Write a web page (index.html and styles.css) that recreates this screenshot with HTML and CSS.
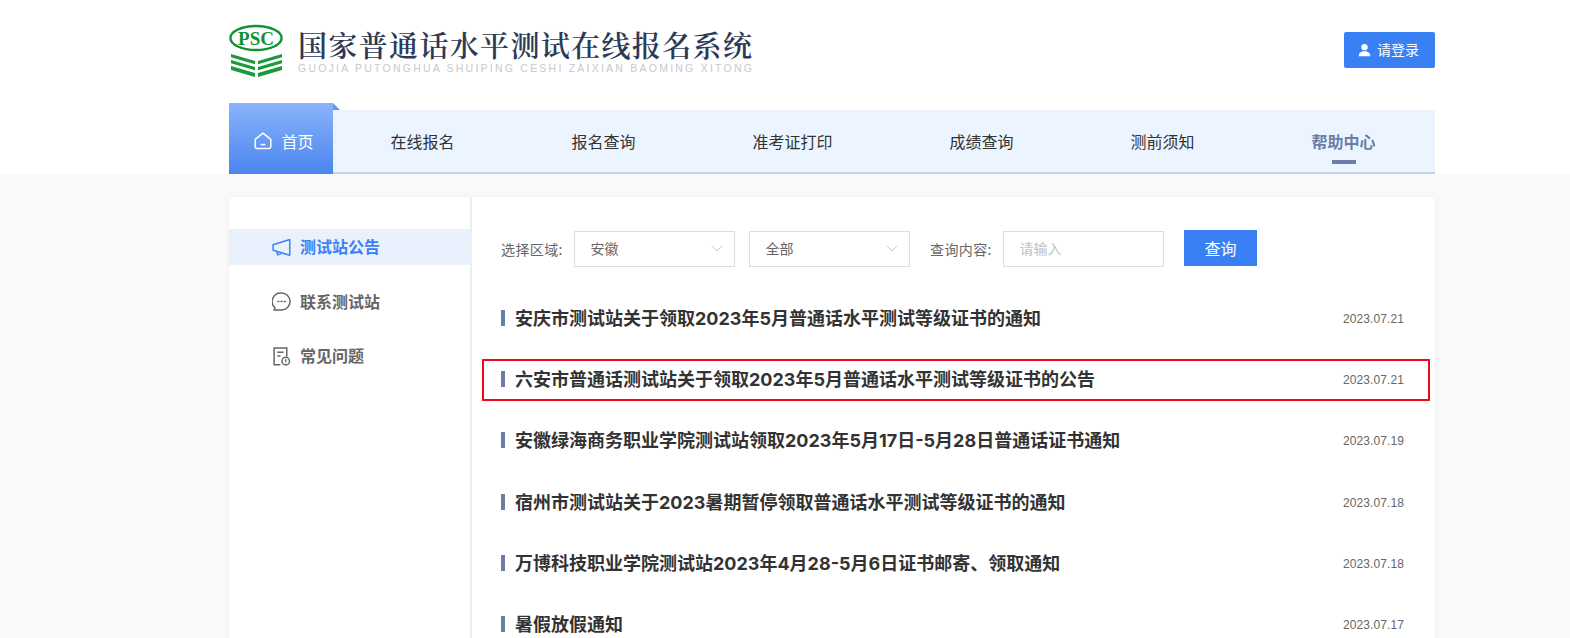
FILE: index.html
```html
<!DOCTYPE html>
<html lang="zh-CN">
<head>
<meta charset="utf-8">
<title>国家普通话水平测试在线报名系统</title>
<link rel="stylesheet" href="styles.css">
</head>
<body>
<header class="header">
  <div class="wrap">
    <div class="topbar">
      <a class="brand">
        <svg class="logo" viewBox="0 0 54 54" width="54" height="54" aria-hidden="true">
          <ellipse cx="27" cy="14" rx="25.6" ry="12" fill="none" stroke="#0f9233" stroke-width="2.4"/>
          <text x="27" y="21" class="logo-text" text-anchor="middle">PSC</text>
          <g fill="#1a9a3a">
            <path d="M2 30 26 37V40.2L2 33.2Z"/>
            <path d="M2 36 26 43V46.2L2 39.2Z"/>
            <path d="M2 42 26 49V53L2 46Z"/>
            <path d="M53 30 29 37V40.2L53 33.2Z"/>
            <path d="M53 36 29 43V46.2L53 39.2Z"/>
            <path d="M53 42 29 49V53L53 46Z"/>
          </g>
        </svg>
        <div class="brand-text">
          <div class="brand-cn">国家普通话水平测试在线报名系统</div>
          <div class="brand-en">GUOJIA PUTONGHUA SHUIPING CESHI ZAIXIAN BAOMING XITONG</div>
        </div>
      </a>
      <button class="login">
        <svg viewBox="0 0 14 14" width="13" height="14" aria-hidden="true"><circle cx="7" cy="4" r="3.4" fill="#fff"/><path d="M0.8 13.6C0.8 10 3.4 8.4 7 8.4S13.2 10 13.2 13.6Z" fill="#fff"/></svg>
        <span class="login-text">请登录</span>
      </button>
    </div>
    <nav class="nav">
      <a class="nav-home">
        <svg viewBox="0 0 18 18" width="18" height="18" fill="none" stroke="#fff" stroke-width="1.5" aria-hidden="true"><path d="M1.2 7.4 9 1.2l7.8 6.2v7.2a2 2 0 0 1-2 2H3.2a2 2 0 0 1-2-2Z" stroke-linejoin="round"/><path d="M6.6 12.6h4.8"/></svg>
        <span>首页</span>
      </a>
      <a class="nav-item">在线报名</a>
      <a class="nav-item">报名查询</a>
      <a class="nav-item">准考证打印</a>
      <a class="nav-item">成绩查询</a>
      <a class="nav-item">测前须知</a>
      <a class="nav-item is-active">帮助中心</a>
    </nav>
  </div>
</header>
<main class="main">
  <div class="card">
    <aside class="side">
      <a class="side-item is-active">
        <svg viewBox="0 0 18 18" fill="none" stroke="#3b80f4" stroke-width="1.4" aria-hidden="true"><path d="M1 6.4 16.8 1.4v15L1 11.6Z" stroke-linejoin="round"/><path d="M4.4 12.6 5.4 16 8.8 14.8"/></svg>
        <span class="side-text">测试站公告</span>
      </a>
      <a class="side-item">
        <svg viewBox="0 0 18 18" fill="none" stroke="#666" stroke-width="1.4" aria-hidden="true"><path d="M9 .9a8.1 8.1 0 0 1 0 16.2H1.9l.9-2.2A8.1 8.1 0 0 1 9 .9Z" stroke-linejoin="round"/><path d="M5.6 9h.9M8.6 9h.9M11.6 9h.9" stroke-linecap="round" stroke-width="1.4"/></svg>
        <span class="side-text">联系测试站</span>
      </a>
      <a class="side-item">
        <svg viewBox="0 0 18 18" fill="none" stroke="#666" stroke-width="1.4" aria-hidden="true"><path d="M8 16.8H2V1h12v8"/><path d="M5 5h6M5 8.5h3"/><circle cx="13" cy="13.4" r="3.6"/><path d="M13 11.6v2.4M13 15v.5"/></svg>
        <span class="side-text">常见问题</span>
      </a>
    </aside>
    <section class="content">
      <form class="filters">
        <label class="flabel">选择区域:</label>
        <div class="select"><span>安徽</span><svg viewBox="0 0 12 7" width="12" height="7" fill="none" stroke="#c4c8d0" stroke-width="1"><path d="M.8.8 6 6l5.2-5.2"/></svg></div>
        <div class="select"><span>全部</span><svg viewBox="0 0 12 7" width="12" height="7" fill="none" stroke="#c4c8d0" stroke-width="1"><path d="M.8.8 6 6l5.2-5.2"/></svg></div>
        <label class="flabel flabel-q">查询内容:</label>
        <div class="input">请输入</div>
        <button type="button" class="search">查询</button>
      </form>
      <ul class="list">
        <li class="row"><span class="row-title">安庆市测试站关于领取2023年5月普通话水平测试等级证书的通知</span><time class="row-date">2023.07.21</time></li>
        <li class="row is-marked"><span class="row-title">六安市普通话测试站关于领取2023年5月普通话水平测试等级证书的公告</span><time class="row-date">2023.07.21</time></li>
        <li class="row"><span class="row-title">安徽绿海商务职业学院测试站领取2023年5月17日-5月28日普通话证书通知</span><time class="row-date">2023.07.19</time></li>
        <li class="row"><span class="row-title">宿州市测试站关于2023暑期暂停领取普通话水平测试等级证书的通知</span><time class="row-date">2023.07.18</time></li>
        <li class="row"><span class="row-title">万博科技职业学院测试站2023年4月28-5月6日证书邮寄、领取通知</span><time class="row-date">2023.07.18</time></li>
        <li class="row"><span class="row-title">暑假放假通知</span><time class="row-date">2023.07.17</time></li>
      </ul>
    </section>
  </div>
</main>
</body>
</html>
```

FILE: styles.css
```css
*, *::before, *::after { box-sizing: border-box; }
html, body { margin: 0; height: 638px; overflow: hidden; }
body {
  background: #f9f9f9;
  font-family: "Noto Sans CJK SC", "Microsoft YaHei", sans-serif;
  color: #333;
}
.header { background: #fff; height: 174px; }
.wrap { width: 1206px; margin-left: 229px; }

.topbar { height: 103px; display: flex; justify-content: space-between; padding-top: 24px; position: relative; }
.brand { display: flex; gap: 15px; height: 54px; }
.logo { display: block; }
.logo-text { font: bold 19px "Liberation Serif", serif; fill: #0f9233; }
.brand-text { padding-top: 6px; }
.brand-cn {
  font-family: "Noto Serif CJK SC", "Noto Sans CJK SC", serif;
  font-weight: 600;
  font-size: 29px; line-height: 30px; letter-spacing: 1.35px;
  color: #2d3a55; white-space: nowrap;
}
.brand-en {
  font-family: "Liberation Sans", sans-serif;
  font-size: 10.5px; line-height: 10px; margin-top: 3px;
  letter-spacing: 2.23px; color: #c5c9ce; white-space: nowrap;
}
.login {
  width: 91px; height: 36px; margin-top: 8px;
  background: #3a80f5; border: 0; border-radius: 2px;
  display: flex; align-items: center; justify-content: center; gap: 6px;
  color: #fff; font: 14px "Noto Sans CJK SC", sans-serif; padding: 0 2px 0 0;
}
.login-text { margin-top: -2px; }

.nav { display: flex; height: 71px; position: relative; }
.nav::before {
  content: ""; position: absolute; left: 0; right: 0; top: 7px; bottom: 0;
  background: #ecf5ff; border-bottom: 2px solid #c3d3e6;
}
.nav-home {
  position: relative; width: 104px; flex: none;
  display: flex; align-items: center; justify-content: center; gap: 9px;
  padding: 5px 0 0 6px;
  background: linear-gradient(#8ab3fb, #4a85ee);
  color: #fff; font-size: 16px;
}
.nav-home::after {
  content: ""; position: absolute; left: 100%; top: 0;
  border-style: solid; border-width: 7px 0 0 7px;
  border-color: transparent transparent transparent #6d96e4;
}
.nav-item {
  position: relative; flex: 1 1 auto; text-align: center;
  padding: 25px 2px 0 0; font-size: 16px; line-height: 26px; color: #333;
  white-space: nowrap;
}
.nav-item.is-active { color: #6b7fa6; font-weight: 700; }
.nav-item.is-active::after {
  content: ""; position: absolute; left: 50%; bottom: 10px;
  width: 24px; height: 4px; margin-left: -13px; background: #6b7fa6;
}

.main { padding-top: 23px; }
.card {
  width: 1206px; margin-left: 229px; height: 600px;
  background: #fff; border-radius: 4px 4px 0 0;
  box-shadow: 0 0 6px rgba(0, 0, 0, .04);
  display: flex;
}
.side {
  width: 243px; flex: none; padding-top: 32px;
  border-right: 2px solid #eee;
  display: flex; flex-direction: column; gap: 18.5px;
}
.side-item {
  height: 36px; display: flex; align-items: center; gap: 9px; padding-left: 43px;
  font-size: 16px; font-weight: 700; color: #666;
}
.side-item.is-active { background: #e8f1fd; color: #3b80f4; }
.side-item svg { width: 19px; height: 19px; flex: none; }
.side-text { margin-top: -2px; }

.content { flex: 1; padding: 33px 0 0 29px; position: relative; }
.filters { display: flex; align-items: flex-start; height: 36px; font-size: 14px; color: #666; }
.flabel { width: 73px; white-space: nowrap; letter-spacing: .4px; line-height: 38px; }
.flabel-q { margin-left: 20px; }
.select, .input {
  height: 36px; width: 161px; margin-top: 1px; border: 1px solid #d9dde6; background: #fff;
  display: flex; align-items: center; justify-content: space-between;
  padding: 0 11px 2px 15.5px; color: #666;
}
.select + .select { margin-left: 14px; }
.input { color: #bdc1c9; }
.search {
  width: 73px; height: 36px; margin-left: 20px;
  background: #3a80f5; color: #fff; border: 0; padding: 0;
  font: 16px "Noto Sans CJK SC", sans-serif;
}

.list { list-style: none; margin: 21.5px 0 0; padding: 0; }
.row {
  height: 61.3px; display: flex; align-items: center; justify-content: space-between;
  padding-right: 31px; position: relative;
}
.row-title {
  position: relative; padding-left: 14px; margin-top: 1px;
  font-family: Inter, "Noto Sans CJK SC", sans-serif;
  font-size: 18px; font-weight: 700; color: #333; line-height: 24px; white-space: nowrap;
}
.row-title::before {
  content: ""; position: absolute; left: 0; top: 3px;
  width: 4px; height: 16px; background: #6b7fa6;
}
.row-date { font-family: "Liberation Sans", sans-serif; font-size: 12px; letter-spacing: .1px; color: #666; margin-top: 1px; }
.row.is-marked::after {
  content: ""; position: absolute; left: -19px; right: 5px; top: 10px; height: 42px;
  border: 2px solid #ea0a1c;
}
```
